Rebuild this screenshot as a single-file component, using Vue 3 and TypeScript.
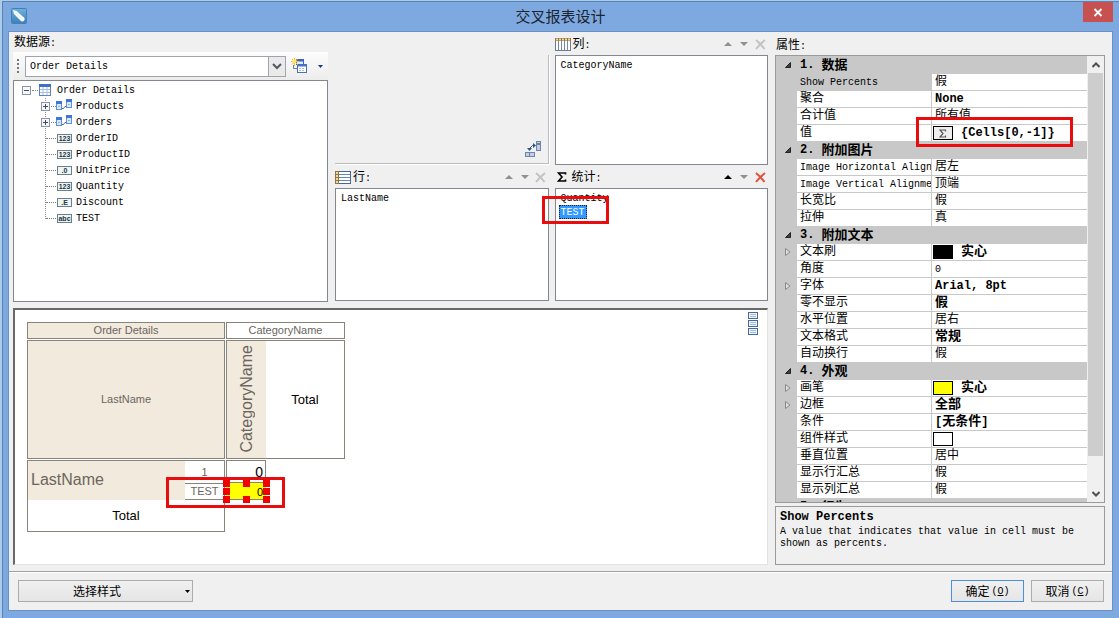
<script setup lang="ts">
import { h, ref } from 'vue'

interface TreeField { icon: string; label: string; branch?: boolean }
interface Prop { name: string; value: string; bold?: boolean; swatch?: string; expandable?: boolean; current?: boolean; marked?: boolean }
interface Group { title: string; rows: Prop[] }

const Txt = (p: { text: string }) =>
  h('span', { class: 'txt' }, (p.text.match(/[\u3400-\u9fff]+|[^\u3400-\u9fff]+/g) ?? []).map((run) =>
    h('span', { class: /[\u3400-\u9fff]/.test(run) ? 'han' : 'lat' }, run)))

const source = ref('Order Details')

const fields: TreeField[] = [
  { icon: 'rel', label: 'Products', branch: true },
  { icon: 'rel', label: 'Orders', branch: true },
  { icon: '123', label: 'OrderID' },
  { icon: '123', label: 'ProductID' },
  { icon: '.0', label: 'UnitPrice' },
  { icon: '123', label: 'Quantity' },
  { icon: '.E', label: 'Discount' },
  { icon: 'abc', label: 'TEST' },
]

const lists = [
  { key: 'columns', label: '列:', items: ['CategoryName'] },
  { key: 'rows', label: '行:', items: ['LastName'] },
  { key: 'totals', label: '统计:', items: ['Quantity', 'TEST'] },
]

const groups: Group[] = [
  { title: '1. 数据', rows: [
    { name: 'Show Percents', value: '假', current: true },
    { name: '聚合', value: 'None', bold: true },
    { name: '合计值', value: '所有值' },
    { name: '值', value: '{Cells[0,-1]}', bold: true, swatch: 'sum', marked: true },
  ] },
  { title: '2. 附加图片', rows: [
    { name: 'Image Horizontal Alignment', value: '居左' },
    { name: 'Image Vertical Alignment', value: '顶端' },
    { name: '长宽比', value: '假' },
    { name: '拉伸', value: '真' },
  ] },
  { title: '3. 附加文本', rows: [
    { name: '文本刷', value: '实心', bold: true, swatch: 'black', expandable: true },
    { name: '角度', value: '0' },
    { name: '字体', value: 'Arial, 8pt', bold: true, expandable: true },
    { name: '零不显示', value: '假', bold: true },
    { name: '水平位置', value: '居右' },
    { name: '文本格式', value: '常规', bold: true },
    { name: '自动换行', value: '假' },
  ] },
  { title: '4. 外观', rows: [
    { name: '画笔', value: '实心', bold: true, swatch: 'yellow', expandable: true },
    { name: '边框', value: '全部', bold: true, expandable: true },
    { name: '条件', value: '[无条件]', bold: true },
    { name: '组件样式', value: '', swatch: 'white' },
    { name: '垂直位置', value: '居中' },
    { name: '显示行汇总', value: '假' },
    { name: '显示列汇总', value: '假' },
  ] },
  { title: '5. 行为', rows: [] },
]
</script>

<template>
  <div class="desktop">
    <div class="window">
      <header class="titlebar">
        <svg class="app-icon" width="16" height="16" viewBox="0 0 16 16" aria-hidden="true">
          <defs>
            <linearGradient id="appBlue" x1="0" y1="0" x2="0" y2="1">
              <stop offset="0" stop-color="#6fb0dc" /><stop offset="1" stop-color="#3c80b8" />
            </linearGradient>
          </defs>
          <rect x="0.5" y="0.5" width="15" height="15" rx="1" fill="url(#appBlue)" stroke="#4580b4" />
          <path d="M2 2 L5.500 3 L13.500 10 Q14 13.500 10.500 13.500 L3 6 Z" fill="#fff" />
          <path d="M5 5 L11 11" stroke="#d3e7f5" />
        </svg>
        <h1>交叉报表设计</h1>
        <button class="close" type="button" aria-label="关闭">
          <svg width="10" height="9" viewBox="0 0 10 9"><path d="M1.500 1 L8.500 8 M8.500 1 L1.500 8" stroke="#fff" stroke-width="1.800" /></svg>
        </button>
      </header>

      <div class="body">
        <main class="main">
          <div class="work">
            <div class="top">
              <section class="source">
                <label class="caption" for="source"><Txt text="数据源:" /></label>
                <div class="toolbar">
                  <span class="grip"></span>
                  <span class="combo">
                    <select id="source" v-model="source">
                      <option>Order Details</option>
                    </select>
                    <span class="combo-arrow">
                      <svg width="10" height="7" viewBox="0 0 10 7"><path d="M1 1 L5 5 L9 1" fill="none" stroke="#505860" stroke-width="2" /></svg>
                    </span>
                  </span>
                  <button class="flat new" type="button" aria-label="新建数据源">
                    <svg width="16" height="16" viewBox="0 0 16 16">
                      <rect x="5.500" y="1.500" width="7" height="5" fill="#dfe9fa" stroke="#3e63bd" />
                      <path d="M5 2.500 H13" stroke="#3e63bd" stroke-width="2" />
                      <path d="M2.500 7 V10.500 H6" fill="none" stroke="#667ba6" />
                      <rect x="6.500" y="6.500" width="9" height="8" fill="#fff" stroke="#4c6fae" />
                      <path d="M6 7.500 H16" stroke="#4772cf" stroke-width="2" />
                      <path d="M8 10.500 H14 M8 12.500 H14" stroke="#a9bede" stroke-dasharray="2 1" />
                      <path d="M3.500 0 V8 M0 3.500 H8 M1 1 L6.500 6.500 M6.500 1 L1 6.500" stroke="#f4bf28" />
                      <circle cx="3.500" cy="3.500" r="2" fill="#ffe46b" />
                    </svg>
                  </button>
                  <button class="flat more" type="button" aria-label="更多">
                    <svg width="5" height="3" viewBox="0 0 5 3"><path d="M0 0 H5 L2.500 3 Z" fill="#123a80" /></svg>
                  </button>
                </div>
                <div class="tree box">
                  <div class="node root">
                    <button class="expander" type="button" aria-label="折叠"></button>
                    <span class="stem"></span>
                    <svg width="12" height="12" viewBox="0 0 12 12">
                      <rect x="0.5" y="0.5" width="11" height="11" fill="#fff" stroke="#5b84c4" />
                      <path d="M0 1.500 H12" stroke="#3f6fc8" stroke-width="3" />
                      <path d="M4 3 V11 M8 3 V11 M1 5.500 H11 M1 8.500 H11" stroke="#a9bfe2" />
                    </svg>
                    <Txt text="Order Details" />
                  </div>
                  <ul class="children">
                    <li v-for="f in fields" :key="f.label" class="node">
                      <button v-if="f.branch" class="expander plus" type="button" aria-label="展开"></button>
                      <span class="stem" :class="{ wide: !f.branch }"></span>
                      <svg v-if="f.icon === 'rel'" width="16" height="12" viewBox="0 0 16 12">
                        <rect x="0.5" y="2.500" width="5" height="8" fill="#dce9fb" stroke="#5f8fd8" />
                        <rect x="0" y="2" width="6" height="3" fill="#3e74db" />
                        <rect x="10.500" y="0.500" width="5" height="8" fill="#dce9fb" stroke="#5f8fd8" />
                        <rect x="10" y="0" width="6" height="3" fill="#3e74db" />
                        <path d="M2 7.500 H4 M12 5.500 H14" stroke="#8db0e2" />
                        <path d="M6 9.500 H7.500 L9 7.500 H10" fill="none" stroke="#56647c" />
                      </svg>
                      <span v-else class="type">{{ f.icon }}</span>
                      <Txt :text="f.label" />
                    </li>
                  </ul>
                </div>
              </section>

              <div class="cross">
                <div class="corner">
                  <button class="flat" type="button" aria-label="交换行列">
                    <svg width="17" height="17" viewBox="0 0 17 17">
                      <rect x="11.500" y="0.500" width="4" height="9" fill="#bdd0e8" stroke="#7185a6" />
                      <path d="M11 3 H16" stroke="#71809b" stroke-width="2" />
                      <rect x="0.500" y="11.500" width="9" height="4" fill="#bdd0e8" stroke="#7185a6" />
                      <path d="M4.500 11 V16" stroke="#71809b" />
                      <path d="M4.500 9 V7.500 L7.500 4.500 H9" fill="none" stroke="#344e86" />
                      <path d="M2 7 H7 L4.500 10 Z M8 2 V7 L11 4.500 Z" fill="#344e86" />
                    </svg>
                  </button>
                </div>
                <section v-for="l in lists" :key="l.key" class="zone" :class="'zone-' + l.key">
                  <header class="zone-head">
                    <svg v-if="l.key === 'columns'" width="16" height="13" viewBox="0 0 16 13">
                      <rect x="0.500" y="0.500" width="15" height="12" fill="#fff" stroke="#6c7c91" />
                      <rect x="0" y="0" width="16" height="3" fill="#8a7448" />
                      <path d="M1 1.500 H16" stroke="#f4dc95" stroke-width="2" stroke-dasharray="2 1" />
                      <path d="M3.500 3 V12 M6.500 3 V12 M9.500 3 V12 M12.500 3 V12" stroke="#7489a8" />
                    </svg>
                    <svg v-else-if="l.key === 'rows'" width="16" height="13" viewBox="0 0 16 13">
                      <rect x="0.500" y="0.500" width="15" height="12" fill="#fff" stroke="#4a6693" />
                      <rect x="0" y="0" width="4" height="13" fill="#8a7448" />
                      <path d="M2 1 V13" stroke="#f4dc95" stroke-width="2" stroke-dasharray="2 1" />
                      <path d="M4 3.500 H15 M4 6.500 H15 M4 9.500 H15" stroke="#6686b6" />
                    </svg>
                    <svg v-else class="sigma" width="10" height="10" viewBox="0 0 10 10">
                      <path d="M8.500 2.500 V1 H1.500 L5 5 L1.500 9 H8.500 V7.500" fill="none" stroke="#000" stroke-width="1.600" />
                    </svg>
                    <Txt :text="l.label" />
                    <span class="tools">
                      <button class="flat up" type="button" aria-label="上移">
                        <svg width="8" height="4" viewBox="0 0 8 4"><path d="M0 4 L4 0 L8 4 Z" fill="currentColor" /></svg>
                      </button>
                      <button class="flat" type="button" aria-label="下移">
                        <svg width="8" height="4" viewBox="0 0 8 4"><path d="M0 0 L4 4 L8 0 Z" fill="currentColor" /></svg>
                      </button>
                      <button class="flat del" type="button" aria-label="删除">
                        <svg width="11" height="11" viewBox="0 0 11 11"><path d="M1 1 Q5 4 9.500 10 M10 1 Q5 5 1 10" fill="none" stroke="currentColor" stroke-width="2" /></svg>
                      </button>
                    </span>
                  </header>
                  <ul class="items box">
                    <li v-for="i in l.items" :key="i" :class="{ picked: i === 'TEST' }">
                      <Txt :text="i" />
                      <span v-if="i === 'TEST'" class="mark mark-item"></span>
                    </li>
                  </ul>
                </section>
              </div>
            </div>

            <section class="preview">
              <div class="sheet">
                <div class="cell beige">Order Details</div>
                <div class="cell">CategoryName</div>
                <div class="cell beige">LastName</div>
                <div class="cell pair">
                  <div class="vertical"><span>CategoryName</span></div>
                  <div class="total">Total</div>
                </div>
                <div class="cell rows-block">
                  <div class="last">LastName</div>
                  <div class="one">1</div>
                  <div class="test">TEST</div>
                  <div class="total">Total</div>
                </div>
                <div class="values">
                  <div class="zero">0</div>
                  <div class="active">0
                    <i v-for="n in 8" :key="n" class="handle" :class="'h' + n"></i>
                    <span class="mark mark-cell"></span>
                  </div>
                </div>
              </div>
              <div class="bands">
                <svg v-for="n in 3" :key="n" width="10" height="7" viewBox="0 0 10 7">
                  <rect x="0.500" y="0.500" width="9" height="6" fill="#f2f7ff" stroke="#45699e" />
                  <path d="M2 2.500 H8 M2 4.500 H8" stroke="#9eb9dc" />
                </svg>
              </div>
            </section>
          </div>

          <aside class="props">
            <h2 class="caption"><Txt text="属性:" /></h2>
            <div class="grid">
              <div class="grid-rows">
                <table>
                  <colgroup><col class="c-gutter" /><col class="c-name" /><col /></colgroup>
                  <tbody v-for="g in groups" :key="g.title">
                    <tr class="group">
                      <td class="gutter">
                        <svg v-if="g.rows.length" width="6" height="6" viewBox="0 0 6 6"><path d="M5.500 0.500 V5.500 H0.500 Z" fill="#404040" stroke="#222" /></svg>
                      </td>
                      <th colspan="2" scope="rowgroup"><Txt :text="g.title" /></th>
                    </tr>
                    <tr v-for="p in g.rows" :key="p.name" :class="{ current: p.current }">
                      <td class="gutter">
                        <svg v-if="p.expandable" width="6" height="8" viewBox="0 0 6 8"><path d="M0.500 0.500 L5 4 L0.500 7.500 Z" fill="#ddd" stroke="#8a8a8a" /></svg>
                      </td>
                      <th scope="row"><Txt :text="p.name" /></th>
                      <td class="value" :class="{ bold: p.bold }">
                        <div class="val">
                          <span v-if="p.swatch" class="swatch" :class="p.swatch">
                            <svg v-if="p.swatch === 'sum'" width="8" height="9" viewBox="0 0 8 9"><path d="M6.500 2.500 V1 H1 L4 4.500 L1 8 H6.500 V6.500" fill="none" stroke="#555" stroke-width="1.200" /></svg>
                          </span>
                          <Txt :text="p.value" />
                          <span v-if="p.marked" class="mark mark-value"></span>
                        </div>
                      </td>
                    </tr>
                  </tbody>
                </table>
              </div>
              <div class="scroll">
                <button class="flat" type="button" aria-label="向上滚动">
                  <svg width="8" height="6" viewBox="0 0 8 6"><path d="M0.500 5 L4 1.500 L7.500 5" fill="none" stroke="#505050" stroke-width="2" /></svg>
                </button>
                <div class="track"><div class="thumb"></div></div>
                <button class="flat" type="button" aria-label="向下滚动">
                  <svg width="8" height="6" viewBox="0 0 8 6"><path d="M0.500 1 L4 4.500 L7.500 1" fill="none" stroke="#505050" stroke-width="2" /></svg>
                </button>
              </div>
            </div>
            <div class="help">
              <h3><Txt text="Show Percents" /></h3>
              <p>A value that indicates that value in cell must be shown as percents.</p>
            </div>
          </aside>
        </main>

        <footer class="footer">
          <button class="btn style" type="button">
            <span>选择样式</span>
            <svg width="5" height="3" viewBox="0 0 5 3"><path d="M0 0 H5 L2.500 3 Z" fill="#000" /></svg>
          </button>
          <button class="btn ok" type="button"><span>确定</span><span class="key">(<u>O</u>)</span></button>
          <button class="btn" type="button"><span>取消</span><span class="key">(<u>C</u>)</span></button>
        </footer>
      </div>
    </div>
  </div>
</template>

<style>
body { margin: 0; }
.txt { white-space: pre; }
.txt .lat { font-size: 10px; }
.txt .han { font-size: 12px; }
.bold .txt .lat, .group .txt .lat, .help h3 .txt .lat { font-size: 12px; }
.bold .txt .han, .group .txt .han { font-size: 13px; }
</style>

<style scoped>
* { box-sizing: border-box; }
.desktop {
  height: 100vh;
  padding: 1px 0 0 2px;
  background: #a9cdea;
  font-family: "Liberation Mono", "Noto Sans CJK SC", monospace;
  font-size: 12px;
  color: #000;
}
.window {
  display: flex;
  flex-direction: column;
  height: 100%;
  padding: 0 6px 7px 5px;
  background: #7ea9e0;
  border-top: 1px solid #5b80b2;
  border-left: 1px solid #5b80b2;
}
h1, h2, h3, p, ul { margin: 0; padding: 0; font-weight: normal; list-style: none; }
button { font: inherit; color: inherit; padding: 0; margin: 0; }
svg { display: block; flex: none; }

.titlebar {
  display: grid;
  grid-template-columns: 30px 1fr 30px;
  height: 29px;
  flex: none;
}
.app-icon { margin: 6px 0 0 3px; }
.titlebar h1 {
  font-family: "Noto Sans CJK SC", sans-serif;
  font-size: 15px;
  line-height: 28px;
  text-align: center;
  color: #1c2430;
}
.close {
  height: 20px;
  border: 0;
  background: #c75050;
  display: grid;
  place-items: center;
}
.body {
  flex: 1;
  min-height: 0;
  display: flex;
  flex-direction: column;
  background: #f0f0f0;
  border: 1px solid #6a90c4;
}
.main {
  flex: 1;
  min-height: 0;
  display: grid;
  grid-template-columns: 755fr 330fr;
  grid-template-rows: 100%;
  gap: 7px;
  padding: 0 7px 6px 4px;
}
.work {
  display: grid;
  grid-template-columns: 100%;
  grid-template-rows: minmax(0, 269fr) minmax(0, 257fr);
  gap: 6px;
  min-height: 0;
  min-width: 0;
}
.top {
  min-height: 0;
  display: grid;
  grid-template-columns: 315fr 433fr;
  grid-template-rows: 100%;
  gap: 7px;
}
.box { background: #fff; border: 1px solid #828790; }
.caption { display: block; height: 20px; line-height: 22px; padding-left: 1px; flex: none; }
.flat { background: none; border: 0; display: grid; place-items: center; }

.source { display: flex; flex-direction: column; min-width: 0; }
.toolbar {
  display: flex;
  align-items: center;
  height: 28px;
  padding-left: 4px;
  flex: none;
  background: linear-gradient(#fdfdfd, #ececec);
}
.grip { width: 2px; height: 14px; background: repeating-linear-gradient(#777 0 2px, transparent 2px 4px); }
.combo { display: flex; position: relative; flex: 1; height: 21px; margin-left: 6px; }
.combo select {
  appearance: none;
  width: 100%;
  padding: 0 20px 0 4px;
  border: 1px solid #a0a4aa;
  border-radius: 0;
  background: #fff;
  font: 10px "Liberation Mono", monospace;
  color: #000;
}
.combo-arrow {
  position: absolute;
  top: 0;
  right: 0;
  bottom: 0;
  width: 18px;
  display: grid;
  place-items: center;
  background: #eaeaea;
  border: 1px solid #a0a4aa;
  pointer-events: none;
}
.new { width: 26px; }
.more { width: 16px; }

.tree { flex: 1; min-height: 0; padding: 1px 0 0 8px; overflow: hidden; }
.node { display: flex; align-items: center; height: 16px; line-height: 16px; }
.node .txt { margin-left: 4px; }
.root .txt { margin-left: 6px; }
.expander {
  width: 9px;
  height: 9px;
  flex: none;
  border: 1px solid #8c95a3;
  background: linear-gradient(#3b4a78, #3b4a78) center / 5px 1px no-repeat #f6f6f6;
}
.plus {
  background:
    linear-gradient(#3b4a78, #3b4a78) center / 5px 1px no-repeat,
    linear-gradient(#3b4a78, #3b4a78) center / 1px 5px no-repeat #f6f6f6;
  position: relative;
  margin-left: -4px;
}
.stem { width: 6px; height: 0; border-top: 1px dotted #808080; margin: 0 1px; }
.children { margin-left: 23px; }
.children .node { background: repeating-linear-gradient(#909090 0 1px, transparent 1px 2px) 0 0 / 1px 100% no-repeat; }
.children .node:last-child { background-size: 1px 9px; }
.children .stem { width: 5px; }
.children .stem.wide { width: 10px; }
.children .plus + .stem { margin: 0 0 0 1px; width: 5px; }
.children .plus + .stem + svg { margin-top: -2px; }
.type {
  width: 15px;
  height: 9px;
  margin-right: 0;
  border: 1px solid #68808a;
  background: #eff5f5;
  font: bold 7px/7px "Liberation Sans", sans-serif;
  text-align: center;
  color: #24343c;
}

.cross {
  display: grid;
  grid-template-columns: 1fr 1fr;
  grid-template-rows: minmax(0, 133fr) minmax(0, 136fr);
  column-gap: 6px;
  min-width: 0;
}
.corner {
  margin-top: 23px;
  margin-bottom: 1px;
  border-right: 1px solid #bdbdbd;
  border-bottom: 1px solid #bdbdbd;
  box-shadow: 1px 1px #fff;
  display: flex;
  align-items: flex-end;
  justify-content: flex-end;
  padding: 0 6px 5px 0;
}
.zone { display: flex; flex-direction: column; min-width: 0; min-height: 0; }
.zone-head { display: flex; align-items: center; height: 23px; flex: none; padding-top: 1px; line-height: 20px; }
.zone-head .txt { margin-left: 2px; padding-top: 2px; }
.sigma { margin: 0 3px 0 2px; }
.tools { display: flex; align-items: center; margin-left: auto; color: #909090; }
.tools .flat { width: 16px; height: 16px; }
.tools .del { color: #c3c3c3; }
.zone-totals .del { color: #e2513c; }
.zone-totals .up { color: #000; }
.items { flex: 1; min-height: 0; padding: 2px 0 0 3px; }
.items li { width: max-content; height: 14px; line-height: 14px; padding: 0 2px; display: flex; position: relative; }
.items .picked { color: #fff; background: #3399ff; outline: 1px dotted #222; outline-offset: -1px; }

.mark { position: absolute; border: 3px solid #e80c0c; z-index: 2; pointer-events: none; }
.mark-item { left: -17px; top: -9px; width: 67px; height: 28px; }
.mark-value { left: -19px; top: -8px; width: 157px; height: 30px; }
.mark-cell { left: -60px; top: -6px; width: 119px; height: 31px; }

.preview {
  min-height: 0;
  display: flex;
  justify-content: space-between;
  background: #fff;
  border: 1px solid #e3e3e3;
  border-top: 2px solid #696969;
  border-left: 2px solid #696969;
  padding: 12px 9px 0 12px;
  font-family: "Liberation Sans", sans-serif;
  font-size: 11px;
  color: #6b665d;
}
.sheet {
  display: grid;
  grid-template-columns: 198px 119px;
  grid-template-rows: 17px 119px 72px;
  gap: 1px;
  height: max-content;
}
.cell { display: grid; place-items: center; border: 1px solid #88847c; }
.beige, .vertical, .last { background: #f2eadd; }
.pair { grid-template-columns: 39px 1fr; place-items: stretch; }
.vertical { display: grid; place-items: center; font-size: 16px; }
.vertical span { writing-mode: vertical-rl; rotate: 180deg; line-height: 20px; }
.total { display: grid; place-items: center; font-size: 13px; color: #000; }
.rows-block { grid-template-columns: 157px 1fr; grid-template-rows: 22px 17px 1fr; place-items: stretch; }
.last { grid-row: 1 / 3; display: flex; align-items: center; padding-left: 3px; font-size: 16px; }
.one, .test { display: grid; place-items: center; }
.test { border-top: 1px solid #88847c; border-bottom: 1px solid #88847c; }
.rows-block .total { grid-column: 1 / 3; }
.values { width: 40px; color: #000; text-align: right; }
.zero { height: 23px; line-height: 22px; border: 1px solid #88847c; padding-right: 2px; font-size: 14px; }
.active { position: relative; height: 17px; line-height: 18px; padding-right: 3px; background: #ff0; border-bottom: 1px solid #88847c; }
.handle { position: absolute; width: 7px; height: 7px; background: #f00000; z-index: 3; }
.h1, .h4, .h6 { left: -3px; }
.h2, .h7 { left: 17px; }
.h3, .h5, .h8 { left: 37px; }
.h1, .h2, .h3 { top: -3px; }
.h4, .h5 { top: 5px; }
.h6, .h7, .h8 { top: 13px; }
.bands { display: flex; flex-direction: column; gap: 1px; margin-top: -10px; }

.props { display: flex; flex-direction: column; min-width: 0; min-height: 0; }
.props .caption { height: 23px; line-height: 24px; }
.grid { flex: 1; min-height: 0; display: flex; border: 1px solid #9a9a9a; background: #c8c8c8; }
.grid-rows { flex: 1; min-width: 0; overflow: hidden; padding-top: 1px; background: #c8c8c8; }
table { width: 100%; table-layout: fixed; border-collapse: separate; border-spacing: 0; }
.c-gutter { width: 21px; }
.c-name { width: 134px; }
tr { height: 17px; }
td, th {
  height: 17px;
  padding: 0 0 0 3px;
  line-height: 15px;
  font-weight: normal;
  text-align: left;
  vertical-align: middle;
  background: #fff;
  border-bottom: 1px solid #c8c8c8;
}
th { overflow: hidden; white-space: nowrap; }
th > .txt, .val { display: flex; align-items: center; height: 16px; }
th > .txt { overflow: hidden; }
td.gutter { background: #c8c8c8; padding-left: 9px; }
.group th { background: #c8c8c8; font-weight: bold; }
.current th { background: #c8c8c8; }
.value { border-left: 1px solid #c8c8c8; }
.val { position: relative; }
.bold { font-weight: bold; }
.swatch { width: 20px; height: 14px; margin: 0 8px 0 -2px; border: 1px solid #000; display: grid; place-items: center; flex: none; }
.black { background: #000; }
.yellow { background: #ff0; }
.sum { background: #eee; }
.scroll { width: 17px; display: flex; flex-direction: column; background: #f0f0f0; }
.scroll .flat { height: 17px; flex: none; }
.track { flex: 1; }
.thumb { height: 93%; margin: 0 1px; background: #cdcdcd; }

.help { height: 59px; flex: none; margin-top: 3px; padding: 1px 4px; border: 1px solid #9a9a9a; }
.help h3 { font-weight: bold; line-height: 16px; height: 18px; }
.help p { font-size: 10px; line-height: 12px; }

.footer {
  display: flex;
  align-items: center;
  gap: 7px;
  height: 39px;
  flex: none;
  padding: 0 8px 0 9px;
  border-top: 1px solid #a0a0a0;
  box-shadow: inset 0 1px #fff;
}
.btn {
  display: flex;
  align-items: center;
  justify-content: center;
  gap: 2px;
  width: 73px;
  height: 22px;
  border: 1px solid #acacac;
  background: linear-gradient(#f0f0f0, #e5e5e5);
}
.key { font-size: 10px; }
.style { width: 175px; margin-right: auto; padding-right: 2px; }
.style span { flex: 1; padding-right: 8px; }
.ok { border-color: #4a90dc; }
</style>
